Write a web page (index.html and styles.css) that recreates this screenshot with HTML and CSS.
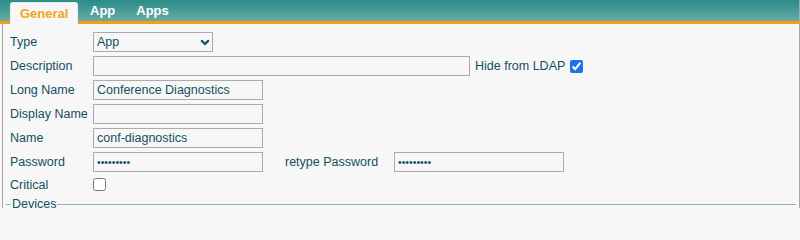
FILE: index.html
```html
<!DOCTYPE html>
<html>
<head>
<meta charset="utf-8">
<link rel="stylesheet" href="styles.css">
</head>
<body>
<div class="app">
  <div class="tabbar">
    <div class="tab active">General</div>
    <div class="tab">App</div>
    <div class="tab">Apps</div>
  </div>
  <div class="panel">
    <div class="form">
      <div class="row">
        <label class="lbl">Type</label>
        <div class="selwrap">
          <select class="sel"><option>App</option></select>
          <svg class="chev" width="10" height="7" viewBox="0 0 10 7"><path d="M1.2 1.3 L5 5 L8.8 1.3" fill="none" stroke="#0f4d5a" stroke-width="2.2"/></svg>
        </div>
      </div>
      <div class="row">
        <label class="lbl">Description</label>
        <input class="inp wide" type="text" value="">
        <span class="side">Hide from LDAP</span>
        <input class="cb" type="checkbox" checked>
      </div>
      <div class="row">
        <label class="lbl">Long Name</label>
        <input class="inp" type="text" value="Conference Diagnostics">
      </div>
      <div class="row">
        <label class="lbl">Display Name</label>
        <input class="inp" type="text" value="">
      </div>
      <div class="row">
        <label class="lbl">Name</label>
        <input class="inp" type="text" value="conf-diagnostics">
      </div>
      <div class="row">
        <label class="lbl">Password</label>
        <input class="inp" type="password" value="secret123">
        <span class="side2">retype Password</span>
        <input class="inp" type="password" value="secret123">
      </div>
      <div class="row short">
        <label class="lbl">Critical</label>
        <input class="cb cb2" type="checkbox">
      </div>
    </div>
    <fieldset class="devices">
      <legend>Devices</legend>
    </fieldset>
  </div>
</div>
</body>
</html>
```
FILE: styles.css
```css
html, body {
  margin: 0;
  padding: 0;
  background: #f7f7f7;
}
body {
  font-family: "Liberation Sans", Arial, sans-serif;
  font-size: 12.5px;
  color: #12505e;
}
.app {
  width: 799px;
  height: 208px;
  border-right: 1px solid #a9a9a9;
  overflow: hidden;
  background: #f7f7f7;
}
.tabbar {
  height: 21px;
  background: linear-gradient(#2a8c88, #6aaaa6);
  border-bottom: 3px solid #f59d0a;
  display: flex;
  align-items: flex-end;
  padding-left: 10px;
}
.tab {
  color: #fff;
  font-weight: bold;
  font-size: 13px;
  height: 19px;
  line-height: 17px;
  padding: 0 10px 0 11px;
}
.tab.active {
  background: #f7f7f7;
  color: #f5a31a;
  height: 22px;
  line-height: 22px;
  margin-bottom: -3px;
  border-radius: 3px 3px 0 0;
  border: 1px solid #e6ecec;
  border-bottom: none;
  box-sizing: border-box;
  width: 68px;
  padding: 0 0 0 9px;
  margin-right: 1px;
}
.panel {
  margin-left: 2px;
  border-left: 1px solid #a9a9a9;
  height: 184px;
  padding-left: 7px;
}
.form {
  display: flex;
  flex-direction: column;
  gap: 4px;
  padding-top: 8px;
}
.row {
  display: flex;
  align-items: center;
  height: 20px;
}
.row.short {
  height: 15px;
  margin-top: 1px;
}
.lbl {
  width: 83px;
  flex: none;
  white-space: nowrap;
}
.inp {
  box-sizing: border-box;
  width: 170px;
  height: 20px;
  border: 1px solid #ababab;
  background: #f7f7f7;
  font-family: "Liberation Sans", Arial, sans-serif;
  font-size: 12.5px;
  color: #12505e;
  padding: 0 3px;
  margin: 0;
  outline: none;
}
.inp[type="password"] {
  font-size: 10.5px;
  letter-spacing: 0;
}
.inp.wide {
  width: 377px;
}
.selwrap {
  position: relative;
  width: 120px;
  height: 20px;
}
.sel {
  appearance: none;
  -webkit-appearance: none;
  box-sizing: border-box;
  width: 120px;
  height: 20px;
  border: 1px solid #ababab;
  background: #f7f7f7;
  font-family: "Liberation Sans", Arial, sans-serif;
  font-size: 12.5px;
  color: #12505e;
  padding: 0 3px;
  margin: 0;
  border-radius: 0;
}
.chev {
  position: absolute;
  left: 107px;
  top: 7px;
}
.side {
  margin-left: 5px;
}
.side2 {
  margin-left: 22px;
  width: 109px;
}
.cb {
  width: 13px;
  height: 13px;
  margin: 0 0 0 5px;
  accent-color: #1a73e8;
}
.cb2 {
  margin-left: 0;
}
.devices {
  margin: 5px 0 0 -4px;
  padding: 0;
  border: none;
  border-top: 1px solid #8fb3ae;
  height: 20px;
  width: 790px;
}
.devices legend {
  padding: 0 1px;
  margin-left: 5px;
  color: #12505e;
}
```
